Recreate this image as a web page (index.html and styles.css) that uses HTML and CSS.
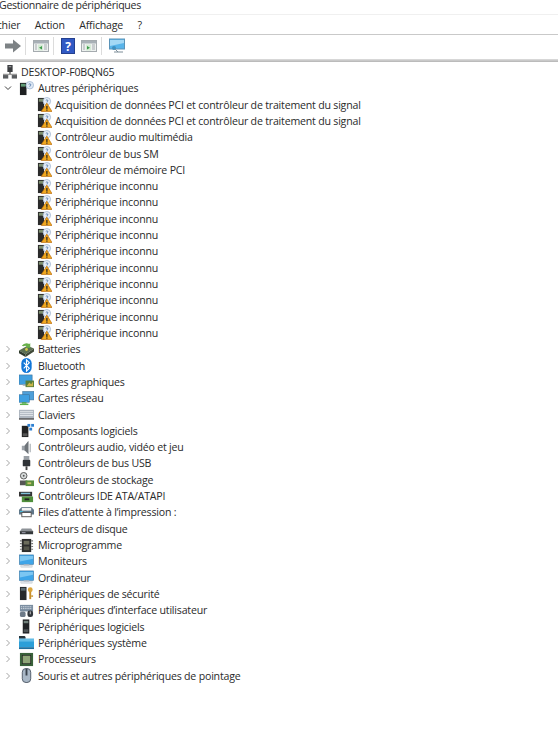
FILE: index.html
```html
<!DOCTYPE html>
<html lang="fr">
<head>
    <meta charset="UTF-8">
    <title>Gestionnaire de périphériques</title>
    <link rel="stylesheet" href="styles.css">
</head>
<body>
    <svg class="defs" width="0" height="0">
        <symbol id="pc" viewBox="0 0 16 16">
            <rect x="5" y="0" width="6" height="8" fill="#3a3d40"/>
            <rect x="6.5" y="1.5" width="3" height="1" fill="#bbb"/>
            <rect x="7" y="8" width="2" height="3" fill="#777"/>
            <rect x="0" y="10" width="16" height="1.5" fill="#9a9a9a"/>
            <rect x="0" y="11.5" width="6" height="4" fill="#5a5d60"/>
            <rect x="10" y="11.5" width="6" height="4" fill="#5a5d60"/>
        </symbol>
        <symbol id="unknown" viewBox="0 0 16 16">
            <rect x="1" y="2" width="7" height="13" fill="#1e2022"/>
            <rect x="2" y="3" width="5" height="3" fill="#5f9a74"/>
            <circle cx="11.5" cy="4.5" r="4" fill="#dfe9f5" stroke="#9db4d0" stroke-width=".8"/>
            <path d="M10.3 3.6q1.2-1.2 2.3 0q.4 1-1 1.6v.8" fill="none" stroke="#5a7fb0"/>
        </symbol>
        <symbol id="warn" viewBox="0 0 16 16">
            <rect x="1" y="1" width="6.5" height="14" fill="#2a2a2a"/>
            <rect x="2" y="2" width="4.5" height="3" fill="#7d8f70"/>
            <circle cx="10.5" cy="4.5" r="4" fill="#e6edf6" stroke="#9db4d0" stroke-width=".8"/>
            <path d="M9.4 3.6q1.1-1.1 2.2 0q.3.9-1 1.5v.7" fill="none" stroke="#5a7fb0"/>
            <path d="M10.5 6.5L16 15.5H4.5z" fill="#f0a81e" stroke="#b8690c" stroke-width=".7"/>
            <rect x="9.9" y="9.5" width="1.3" height="3.2" fill="#222"/>
            <rect x="9.9" y="13.3" width="1.3" height="1.3" fill="#222"/>
        </symbol>
        <symbol id="battery" viewBox="0 0 16 16">
            <path d="M0 9l9-5 7 3-9 6z" fill="#5b6f52"/>
            <path d="M0 9l7 4v3l-7-4z" fill="#2f3a2c"/>
            <path d="M7 13l9-6v3l-9 6z" fill="#404a38"/>
            <path d="M3 4q3-4 8-2l1-1v5h-5l1.5-1.5q-2-1-4 0z" fill="#67b04a"/>
            <circle cx="8" cy="8" r="1.5" fill="#d7c94c"/>
        </symbol>
        <symbol id="bluetooth" viewBox="0 0 16 16">
            <rect x="2.5" y="0" width="11" height="16" rx="5.5" fill="#1277d8"/>
            <path d="M5 5l6 6-3 3V2l3 3-6 6" fill="none" stroke="#fff" stroke-width="1.2"/>
        </symbol>
        <symbol id="gpu" viewBox="0 0 16 16">
            <rect x="0" y="1" width="14" height="10" fill="#3f9fe0" stroke="#3b6f96" stroke-width=".6"/>
            <rect x="4" y="11" width="6" height="1.5" fill="#9aa8b5"/>
            <rect x="7" y="7" width="9" height="7" fill="#587f3a"/>
            <path d="M8 13l3-4 2 2 2-3v5z" fill="#c8b54a"/>
        </symbol>
        <symbol id="net" viewBox="0 0 16 16">
            <rect x="4" y="0.5" width="12" height="9" fill="#4f9fd8" stroke="#3b6f96" stroke-width=".6"/>
            <rect x="0" y="4" width="11" height="8" fill="#3f9fe0" stroke="#3b6f96" stroke-width=".6"/>
            <rect x="3" y="12" width="5" height="1.5" fill="#45a045"/>
            <rect x="1" y="13.5" width="9" height="1.5" fill="#5bb24a"/>
        </symbol>
        <symbol id="keyboard" viewBox="0 0 16 16">
            <rect x="0" y="3" width="16" height="10" fill="#aeb6c0"/>
            <path d="M1 5h14M1 7h14M1 9h14" stroke="#e3e7ec" stroke-width="1"/>
            <rect x="0" y="12" width="16" height="1.5" fill="#555"/>
        </symbol>
        <symbol id="soft" viewBox="0 0 16 16">
            <rect x="3" y="3" width="7" height="12" fill="#222"/>
            <rect x="4" y="11" width="5" height="3" fill="#555"/>
            <rect x="9" y="1" width="3" height="3" fill="#2d7fd1"/>
            <rect x="13" y="1" width="3" height="3" fill="#2d7fd1"/>
            <rect x="11" y="5" width="3" height="3" fill="#2d7fd1"/>
        </symbol>
        <symbol id="audio" viewBox="0 0 16 16">
            <path d="M3 6h3l4-5v14l-4-4H3z" fill="#9ea4aa"/>
            <path d="M6 6l4-5v14l-4-4z" fill="#6f757a"/>
            <path d="M12 4v9" stroke="#b8bdc2" stroke-width="1.5"/>
        </symbol>
        <symbol id="usb" viewBox="0 0 16 16">
            <rect x="5" y="0" width="6" height="4" fill="#9aa0a6"/>
            <rect x="4" y="4" width="8" height="7" rx="1" fill="#2e3236"/>
            <rect x="7" y="11" width="2" height="4" fill="#444"/>
        </symbol>
        <symbol id="storage" viewBox="0 0 16 16">
            <circle cx="5" cy="4" r="3.5" fill="#d8dcdc" stroke="#555"/>
            <circle cx="5" cy="4" r="1" fill="#555"/>
            <path d="M1 9h8l-2 5H1z" fill="#555"/>
            <rect x="7" y="9" width="9" height="6" fill="#5b8f3e"/>
            <rect x="9" y="11" width="4" height="2" fill="#c9c26a"/>
        </symbol>
        <symbol id="ide" viewBox="0 0 16 16">
            <rect x="0" y="3" width="14" height="5" fill="#333"/>
            <rect x="2" y="4" width="10" height="1.5" fill="#7fc0d8"/>
            <rect x="3" y="8" width="12" height="6" fill="#4f8f3c"/>
            <rect x="6" y="10" width="5" height="2" fill="#222"/>
        </symbol>
        <symbol id="printer" viewBox="0 0 16 16">
            <path d="M0 5l3-3h10l3 3v5H0z" fill="#5f7688"/>
            <rect x="3" y="3" width="10" height="3" fill="#f2f2f2"/>
            <rect x="1" y="6.5" width="3" height="1" fill="#46c0e0"/>
            <rect x="3" y="8" width="10" height="4.5" fill="#fff" stroke="#555"/>
        </symbol>
        <symbol id="disk" viewBox="0 0 16 16">
            <path d="M3 8h10l2 3v3H1v-3z" fill="#8d9297"/>
            <rect x="1" y="11" width="14" height="3" fill="#33373a"/>
            <rect x="3" y="12" width="4" height="1" fill="#aab"/>
        </symbol>
        <symbol id="firmware" viewBox="0 0 16 16">
            <rect x="3" y="1" width="10" height="14" fill="#2c2c2c"/>
            <path d="M1 3h2M1 6h2M1 9h2M1 12h2M13 3h2M13 6h2M13 9h2M13 12h2" stroke="#777" stroke-width="1.2"/>
            <rect x="5" y="3" width="6" height="4" fill="#6c6c5c"/>
            <rect x="5" y="9" width="6" height="4" fill="#55554a"/>
        </symbol>
        <symbol id="monitor" viewBox="0 0 16 16">
            <rect x="0.5" y="1" width="15" height="10" fill="#3fa5e8" stroke="#3c7aa8" stroke-width=".7"/>
            <path d="M1 2h14v3L1 8z" fill="#7cc6f2"/>
            <rect x="5" y="11" width="6" height="1.5" fill="#b4bcc4"/>
            <rect x="2" y="12.5" width="12" height="1.5" fill="#dfe3e8" stroke="#aab2ba" stroke-width=".4"/>
        </symbol>
        <symbol id="security" viewBox="0 0 16 16">
            <rect x="1" y="1" width="7" height="14" fill="#26292c"/>
            <rect x="2" y="2" width="5" height="3" fill="#5a6a70"/>
            <circle cx="12" cy="4" r="2.6" fill="#dca53a"/>
            <rect x="11" y="6" width="2" height="8" fill="#c8902a"/>
            <rect x="13" y="10" width="2" height="1.5" fill="#c8902a"/>
        </symbol>
        <symbol id="hid" viewBox="0 0 16 16">
            <rect x="1" y="2" width="14" height="7" fill="#7a8da0"/>
            <path d="M2 4h12M2 6h12" stroke="#d5dde5" stroke-dasharray="1.5 .8"/>
            <rect x="1" y="9" width="6" height="6" rx="2" fill="#6d7a88"/>
            <rect x="9" y="8" width="6" height="7" rx="2.5" fill="#31363c"/>
            <rect x="11.5" y="9" width="1" height="3" fill="#ccc"/>
        </symbol>
        <symbol id="softdev" viewBox="0 0 16 16">
            <rect x="4" y="0.5" width="7" height="15" fill="#202326"/>
            <rect x="5" y="2" width="5" height="2.5" fill="#70807a"/>
            <rect x="5" y="11" width="5" height="3" fill="#4d5356"/>
        </symbol>
        <symbol id="system" viewBox="0 0 16 16">
            <path d="M0 1h6l1 1v2H0z" fill="#26323a"/>
            <rect x="0" y="4" width="16" height="9" fill="#2c9fd8"/>
            <rect x="0" y="4" width="16" height="3" fill="#62bce6"/>
            <rect x="0" y="13" width="16" height="2" fill="#1f6f9e"/>
        </symbol>
        <symbol id="cpu" viewBox="0 0 16 16">
            <rect x="1" y="1" width="14" height="14" fill="#39613a"/>
            <rect x="3.5" y="3.5" width="9" height="9" fill="#8fa678" stroke="#222" stroke-width=".7"/>
        </symbol>
        <symbol id="mouse" viewBox="0 0 16 16">
            <rect x="3.5" y="0.5" width="9" height="15" rx="4" fill="#a9b7c6" stroke="#4f5a66"/>
            <rect x="7" y="1" width="2" height="7" fill="#39424c"/>
        </symbol>
    </svg>

    <div class="titleBar">Gestionnaire de périphériques</div>
    <div class="menuBar">
        <span>Fichier</span>
        <span>Action</span>
        <span>Affichage</span>
        <span>?</span>
    </div>
    <div class="toolBar">
        <svg class="tool" viewBox="0 0 16 16"><path d="M0 5.5h8V1.5l8 6.500-8 6.500v-4H0z" fill="#7d8285"/></svg>
        <div class="sep"></div>
        <svg class="tool" viewBox="0 0 16 16"><rect x=".5" y="2.5" width="15" height="11" fill="#eef1f0" stroke="#a5abaf"/><rect x="1" y="3" width="14" height="2.5" fill="#a8b0b6"/><rect x="5" y="6.5" width="5" height="6" fill="#d5ebd5"/><path d="M9 8l-3 1.7L9 11.5z" fill="#3c9a4c"/><path d="M2 7h2M2 9h2M2 11h2M11 7h3M11 9h3M11 11h3" stroke="#a5abaf"/></svg>
        <div class="sep"></div>
        <svg class="tool help" viewBox="0 0 14 16"><rect x=".5" y=".5" width="13" height="15" fill="#3159c4" stroke="#24408f"/><text x="7" y="12.5" class="helpMark">?</text></svg>
        <svg class="tool" viewBox="0 0 16 16"><rect x=".5" y="2.5" width="15" height="11" fill="#eef1f0" stroke="#a5abaf"/><rect x="1" y="3" width="14" height="2.5" fill="#a8b0b6"/><rect x="5" y="6.5" width="5" height="6" fill="#d5ebd5"/><path d="M6 8l3 1.7L6 11.5z" fill="#3c9a4c"/><path d="M2 7h2M2 9h2M2 11h2M11 7h3M11 9h3M11 11h3" stroke="#a5abaf"/></svg>
        <div class="sep"></div>
        <svg class="tool" viewBox="0 0 16 16"><rect x=".5" y="1" width="15" height="10" fill="#58b4ea" stroke="#5a93b8"/><path d="M1 2h14v3L1 8z" fill="#a4d8f5"/><circle cx="5" cy="10" r="2" fill="#3f8fc0"/><path d="M6 11l3 3M5 14h9" stroke="#7d8d98"/></svg>
    </div>
    <div class="divider"></div>

    <div class="tree">
        <div class="row"><svg class="icon rootIcon"><use href="#pc"/></svg>DESKTOP-F0BQN65</div>
        <div class="row"><svg class="chevron" viewBox="0 0 8 8"><path d="M1 2.5l3 3 3-3"/></svg><svg class="icon"><use href="#unknown"/></svg>Autres périphériques</div>
        <div class="row child"><svg class="icon"><use href="#warn"/></svg>Acquisition de données PCI et contrôleur de traitement du signal</div>
        <div class="row child"><svg class="icon"><use href="#warn"/></svg>Acquisition de données PCI et contrôleur de traitement du signal</div>
        <div class="row child"><svg class="icon"><use href="#warn"/></svg>Contrôleur audio multimédia</div>
        <div class="row child"><svg class="icon"><use href="#warn"/></svg>Contrôleur de bus SM</div>
        <div class="row child"><svg class="icon"><use href="#warn"/></svg>Contrôleur de mémoire PCI</div>
        <div class="row child"><svg class="icon"><use href="#warn"/></svg>Périphérique inconnu</div>
        <div class="row child"><svg class="icon"><use href="#warn"/></svg>Périphérique inconnu</div>
        <div class="row child"><svg class="icon"><use href="#warn"/></svg>Périphérique inconnu</div>
        <div class="row child"><svg class="icon"><use href="#warn"/></svg>Périphérique inconnu</div>
        <div class="row child"><svg class="icon"><use href="#warn"/></svg>Périphérique inconnu</div>
        <div class="row child"><svg class="icon"><use href="#warn"/></svg>Périphérique inconnu</div>
        <div class="row child"><svg class="icon"><use href="#warn"/></svg>Périphérique inconnu</div>
        <div class="row child"><svg class="icon"><use href="#warn"/></svg>Périphérique inconnu</div>
        <div class="row child"><svg class="icon"><use href="#warn"/></svg>Périphérique inconnu</div>
        <div class="row child"><svg class="icon"><use href="#warn"/></svg>Périphérique inconnu</div>
        <div class="row"><svg class="chevron" viewBox="0 0 8 8"><path d="M2.5 1l3 3-3 3"/></svg><svg class="icon"><use href="#battery"/></svg>Batteries</div>
        <div class="row"><svg class="chevron" viewBox="0 0 8 8"><path d="M2.5 1l3 3-3 3"/></svg><svg class="icon"><use href="#bluetooth"/></svg>Bluetooth</div>
        <div class="row"><svg class="chevron" viewBox="0 0 8 8"><path d="M2.5 1l3 3-3 3"/></svg><svg class="icon"><use href="#gpu"/></svg>Cartes graphiques</div>
        <div class="row"><svg class="chevron" viewBox="0 0 8 8"><path d="M2.5 1l3 3-3 3"/></svg><svg class="icon"><use href="#net"/></svg>Cartes réseau</div>
        <div class="row"><svg class="chevron" viewBox="0 0 8 8"><path d="M2.5 1l3 3-3 3"/></svg><svg class="icon"><use href="#keyboard"/></svg>Claviers</div>
        <div class="row"><svg class="chevron" viewBox="0 0 8 8"><path d="M2.5 1l3 3-3 3"/></svg><svg class="icon"><use href="#soft"/></svg>Composants logiciels</div>
        <div class="row"><svg class="chevron" viewBox="0 0 8 8"><path d="M2.5 1l3 3-3 3"/></svg><svg class="icon"><use href="#audio"/></svg>Contrôleurs audio, vidéo et jeu</div>
        <div class="row"><svg class="chevron" viewBox="0 0 8 8"><path d="M2.5 1l3 3-3 3"/></svg><svg class="icon"><use href="#usb"/></svg>Contrôleurs de bus USB</div>
        <div class="row"><svg class="chevron" viewBox="0 0 8 8"><path d="M2.5 1l3 3-3 3"/></svg><svg class="icon"><use href="#storage"/></svg>Contrôleurs de stockage</div>
        <div class="row"><svg class="chevron" viewBox="0 0 8 8"><path d="M2.5 1l3 3-3 3"/></svg><svg class="icon"><use href="#ide"/></svg>Contrôleurs IDE ATA/ATAPI</div>
        <div class="row"><svg class="chevron" viewBox="0 0 8 8"><path d="M2.5 1l3 3-3 3"/></svg><svg class="icon"><use href="#printer"/></svg>Files d’attente à l’impression :</div>
        <div class="row"><svg class="chevron" viewBox="0 0 8 8"><path d="M2.5 1l3 3-3 3"/></svg><svg class="icon"><use href="#disk"/></svg>Lecteurs de disque</div>
        <div class="row"><svg class="chevron" viewBox="0 0 8 8"><path d="M2.5 1l3 3-3 3"/></svg><svg class="icon"><use href="#firmware"/></svg>Microprogramme</div>
        <div class="row"><svg class="chevron" viewBox="0 0 8 8"><path d="M2.5 1l3 3-3 3"/></svg><svg class="icon"><use href="#monitor"/></svg>Moniteurs</div>
        <div class="row"><svg class="chevron" viewBox="0 0 8 8"><path d="M2.5 1l3 3-3 3"/></svg><svg class="icon"><use href="#monitor"/></svg>Ordinateur</div>
        <div class="row"><svg class="chevron" viewBox="0 0 8 8"><path d="M2.5 1l3 3-3 3"/></svg><svg class="icon"><use href="#security"/></svg>Périphériques de sécurité</div>
        <div class="row"><svg class="chevron" viewBox="0 0 8 8"><path d="M2.5 1l3 3-3 3"/></svg><svg class="icon"><use href="#hid"/></svg>Périphériques d’interface utilisateur</div>
        <div class="row"><svg class="chevron" viewBox="0 0 8 8"><path d="M2.5 1l3 3-3 3"/></svg><svg class="icon"><use href="#softdev"/></svg>Périphériques logiciels</div>
        <div class="row"><svg class="chevron" viewBox="0 0 8 8"><path d="M2.5 1l3 3-3 3"/></svg><svg class="icon"><use href="#system"/></svg>Périphériques système</div>
        <div class="row"><svg class="chevron" viewBox="0 0 8 8"><path d="M2.5 1l3 3-3 3"/></svg><svg class="icon"><use href="#cpu"/></svg>Processeurs</div>
        <div class="row"><svg class="chevron" viewBox="0 0 8 8"><path d="M2.5 1l3 3-3 3"/></svg><svg class="icon"><use href="#mouse"/></svg>Souris et autres périphériques de pointage</div>
    </div>
</body>
</html>
```

FILE: styles.css
```css
body {
    margin: 0;
    background-color: #fff;
    color: #2a2a2a;
    font-family: "Open Sans", "Noto Sans", sans-serif;
    font-size: 10.6px;
    letter-spacing: -0.2px;
    overflow: hidden;
}
.defs {
    display: block;
    height: 0;
}
.titleBar {
    height: 14px;
    line-height: 11px;
    margin-left: -1px;
    letter-spacing: -0.3px;
    white-space: nowrap;
}
.menuBar {
    display: flex;
    gap: 14.5px;
    height: 20px;
    line-height: 20px;
    margin-left: -11px;
    border-top: 1px solid #f0f0f0;
    box-sizing: border-box;
}
.toolBar {
    display: flex;
    align-items: center;
    height: 22px;
    padding: 0 0 2px 5px;
    border-top: 1px solid #c9c9c9;
}
.tool {
    width: 16px;
    height: 16px;
}
.help {
    width: 14px;
    margin-right: 6px;
}
.helpMark {
    fill: #fff;
    font-size: 12px;
    font-weight: bold;
    text-anchor: middle;
}
.sep {
    width: 1px;
    height: 18px;
    margin: 0 7px 0 4px;
    background-color: #dcdcdc;
}
.divider {
    height: 3px;
    background: linear-gradient(#dedede, #b4b4b4);
}
.tree {
    display: flex;
    flex-direction: column;
    margin-top: 1.84px;
}
.row {
    display: flex;
    align-items: center;
    height: 16.32px;
    padding-left: 19px;
    white-space: nowrap;
}
.row.child {
    padding-left: 37px;
}
.row.child .icon {
    margin-right: 3px;
}
.chevron {
    width: 8px;
    height: 8px;
    margin-left: -15px;
    margin-right: 7px;
    fill: none;
    stroke: #a6a6a6;
}
.row:nth-child(2) .chevron {
    stroke: #404040;
}
.icon {
    flex: none;
    width: 15px;
    height: 15px;
    margin-right: 4px;
}
.rootIcon {
    width: 14px;
    height: 14px;
    margin-left: -16px;
    margin-right: 4px;
}
```
